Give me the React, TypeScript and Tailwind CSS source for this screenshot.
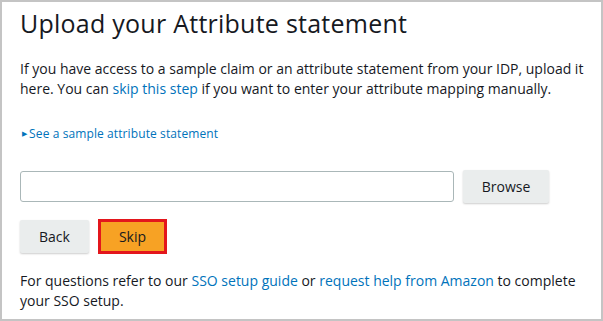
import React from "react";

export default function App() {
  return (
    <div className="w-[603px] h-[321px] bg-white border-2 border-[#c4c4c4] pl-[18px] pr-[8px] text-[#16191f] font-['Open_Sans',sans-serif] overflow-hidden">
      <h1 className="text-[25px] leading-[30px] mt-[6px] tracking-[0.25px]">Upload your Attribute statement</h1>
      <p className="mt-[21px] text-[14px] leading-[20px]">
        If you have access to a sample claim or an attribute statement from your IDP, upload it here. You can{" "}
        <a className="text-[#0073bb]">skip this step</a> if you want to enter your attribute mapping manually.
      </p>
      <div className="mt-[26px] flex items-center text-[12px] text-[#0073bb] tracking-[0.1px]">
        <span className="text-[7px] mr-[2px] ml-[2px]">▶</span>
        <span>See a sample attribute statement</span>
      </div>
      <div className="mt-[27px] flex items-center gap-[9px]">
        <input className="w-[434px] h-[31px] border border-[#aab7b8] rounded-[3px]" />
        <button className="w-[86px] h-[33px] bg-[#eaeded] rounded-[2px] shadow-[0_1px_2px_rgba(0,0,0,0.2)] text-[14px]">Browse</button>
      </div>
      <div className="mt-[16px] flex items-center gap-[9px]">
        <button className="w-[69px] h-[33px] bg-[#eaeded] rounded-[2px] shadow-[0_1px_2px_rgba(0,0,0,0.2)] text-[14px]">Back</button>
        <button className="w-[69px] h-[35px] bg-[#f7a224] border-[3px] border-[#e3161c] text-[14px]">Skip</button>
      </div>
      <p className="mt-[17px] text-[14px] leading-[20px] pr-[14px]">
        For questions refer to our <a className="text-[#0073bb]">SSO setup guide</a> or{" "}
        <a className="text-[#0073bb]">request help from Amazon</a> to complete your SSO setup.
      </p>
    </div>
  );
}
